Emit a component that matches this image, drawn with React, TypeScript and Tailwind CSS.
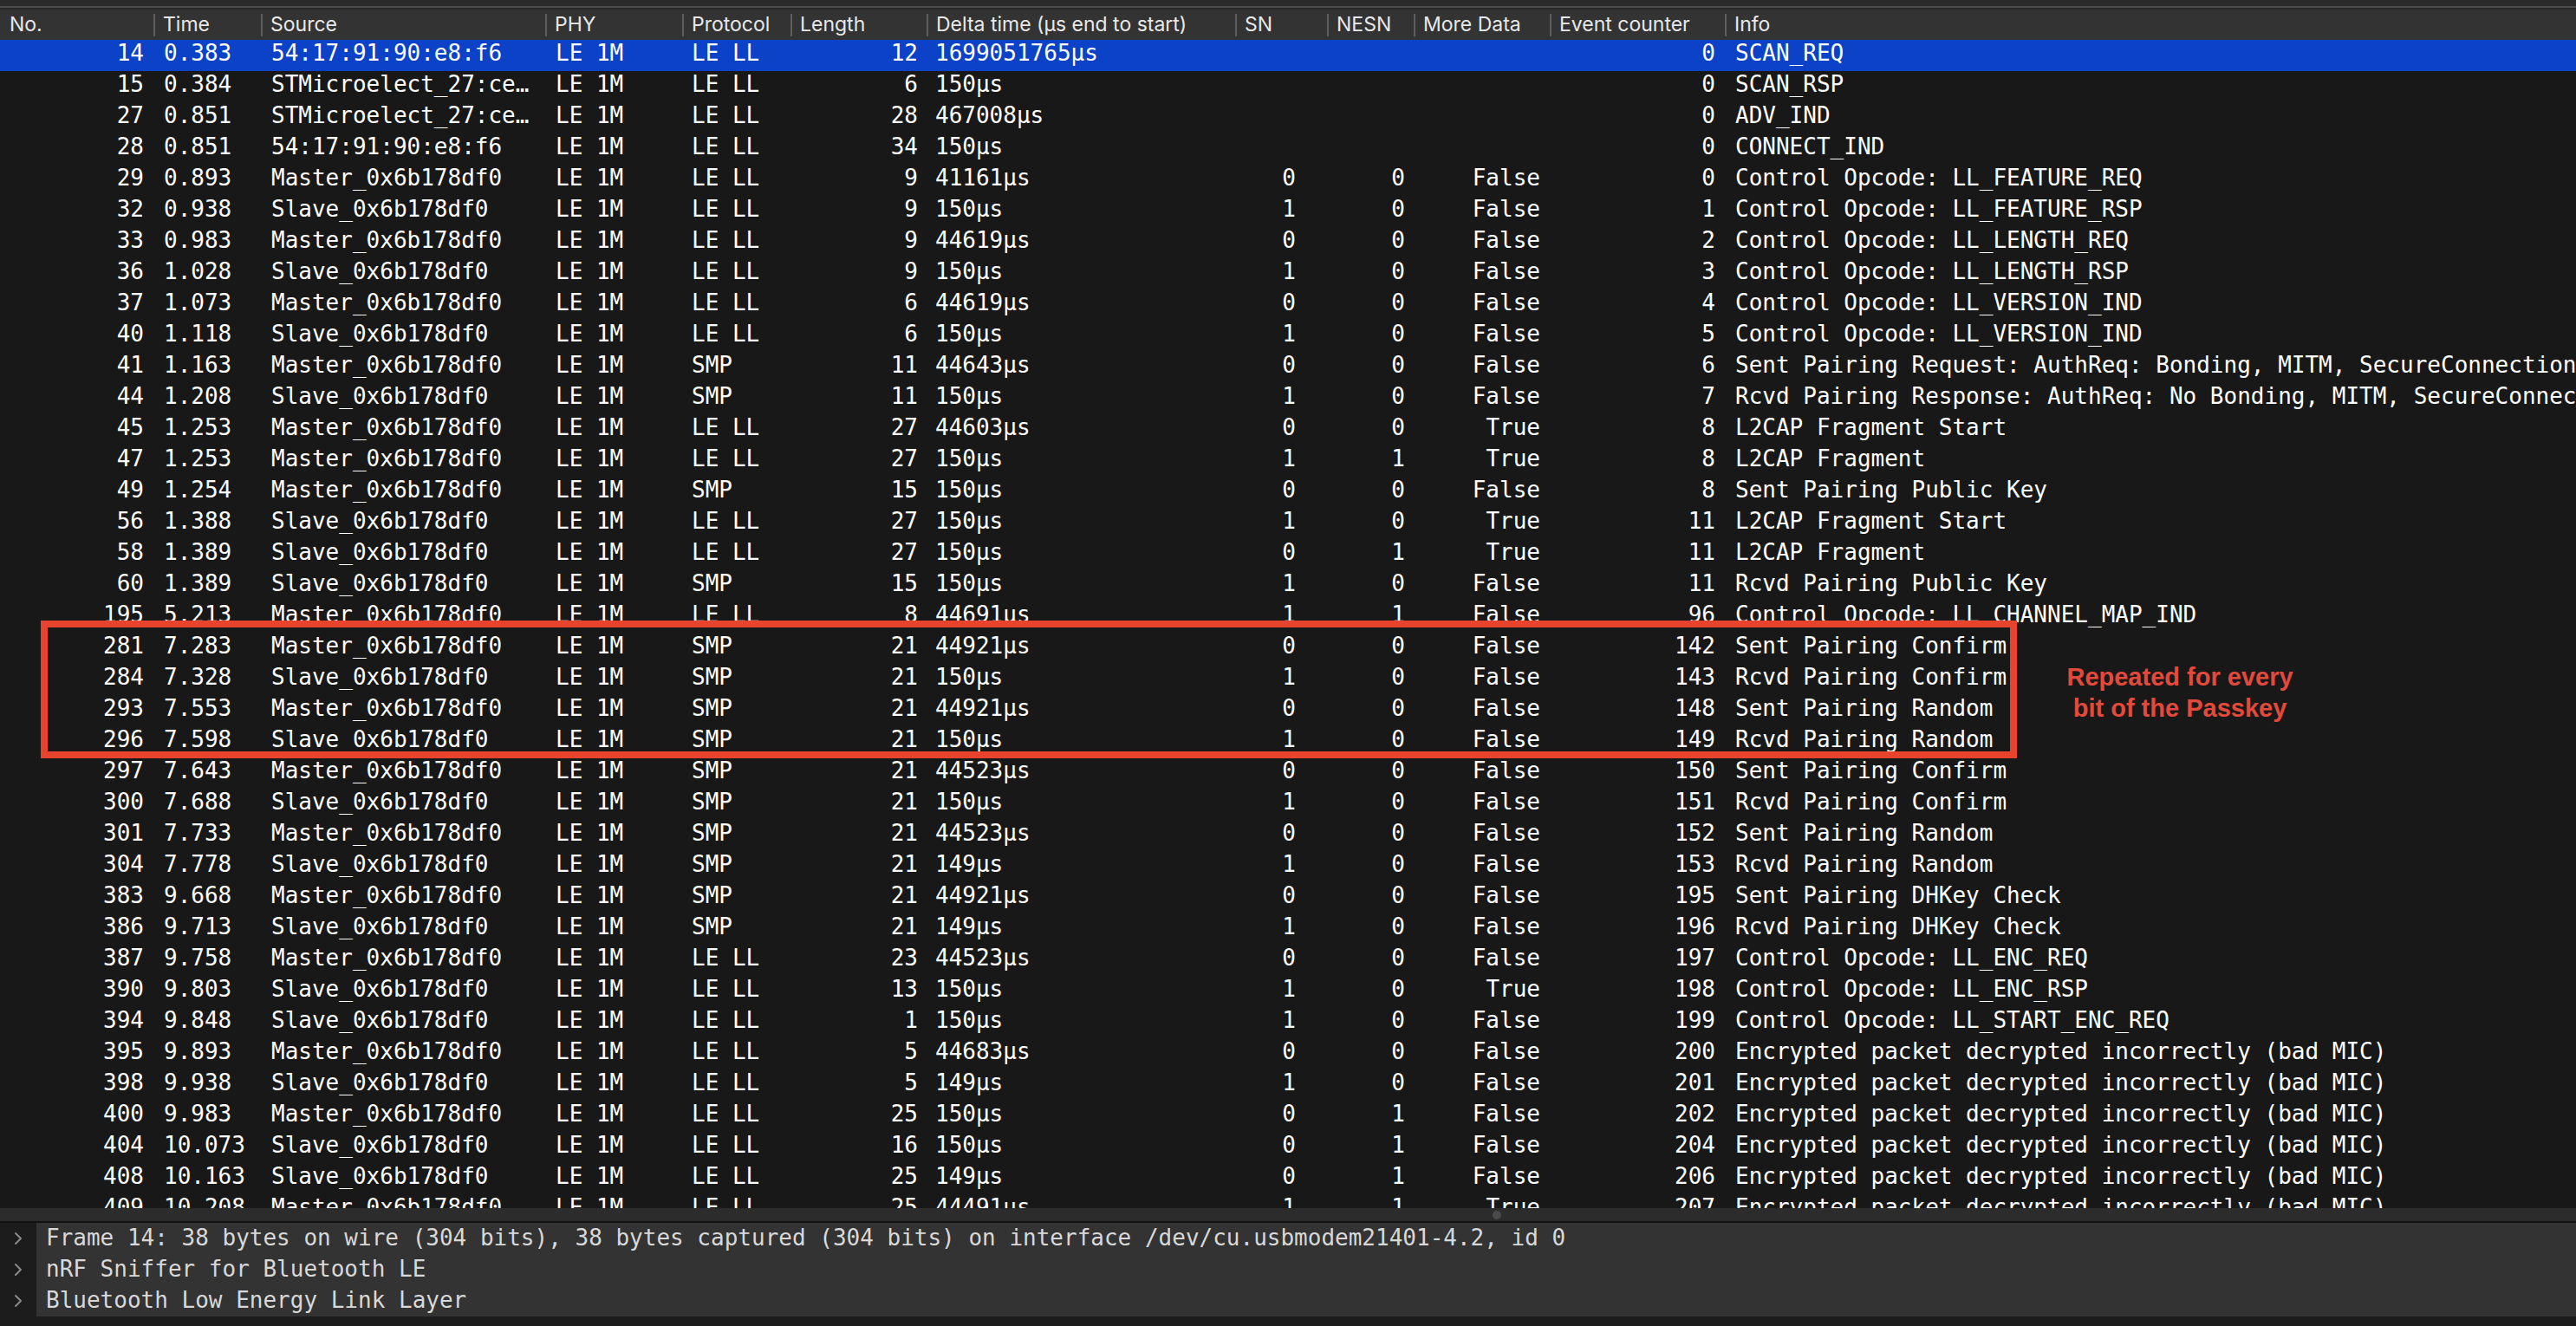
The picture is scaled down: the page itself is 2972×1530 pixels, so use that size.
import React from 'react';

const M = 'Master_0x6b178df0';
const S = 'Slave_0x6b178df0';
const ST = 'STMicroelect_27:ce…';
const A = '54:17:91:90:e8:f6';
const BAD = 'Encrypted packet decrypted incorrectly (bad MIC)';

// no, time, source, phy, protocol, length, delta, sn, nesn, more, event, info
const packets: string[][] = [
  ['14', '0.383', A, 'LE 1M', 'LE LL', '12', '1699051765µs', '', '', '', '0', 'SCAN_REQ'],
  ['15', '0.384', ST, 'LE 1M', 'LE LL', '6', '150µs', '', '', '', '0', 'SCAN_RSP'],
  ['27', '0.851', ST, 'LE 1M', 'LE LL', '28', '467008µs', '', '', '', '0', 'ADV_IND'],
  ['28', '0.851', A, 'LE 1M', 'LE LL', '34', '150µs', '', '', '', '0', 'CONNECT_IND'],
  ['29', '0.893', M, 'LE 1M', 'LE LL', '9', '41161µs', '0', '0', 'False', '0', 'Control Opcode: LL_FEATURE_REQ'],
  ['32', '0.938', S, 'LE 1M', 'LE LL', '9', '150µs', '1', '0', 'False', '1', 'Control Opcode: LL_FEATURE_RSP'],
  ['33', '0.983', M, 'LE 1M', 'LE LL', '9', '44619µs', '0', '0', 'False', '2', 'Control Opcode: LL_LENGTH_REQ'],
  ['36', '1.028', S, 'LE 1M', 'LE LL', '9', '150µs', '1', '0', 'False', '3', 'Control Opcode: LL_LENGTH_RSP'],
  ['37', '1.073', M, 'LE 1M', 'LE LL', '6', '44619µs', '0', '0', 'False', '4', 'Control Opcode: LL_VERSION_IND'],
  ['40', '1.118', S, 'LE 1M', 'LE LL', '6', '150µs', '1', '0', 'False', '5', 'Control Opcode: LL_VERSION_IND'],
  ['41', '1.163', M, 'LE 1M', 'SMP', '11', '44643µs', '0', '0', 'False', '6', 'Sent Pairing Request: AuthReq: Bonding, MITM, SecureConnection, CT2, IO Capability: KeyboardDisplay'],
  ['44', '1.208', S, 'LE 1M', 'SMP', '11', '150µs', '1', '0', 'False', '7', 'Rcvd Pairing Response: AuthReq: No Bonding, MITM, SecureConnection, CT2, IO Capability: DisplayOnly'],
  ['45', '1.253', M, 'LE 1M', 'LE LL', '27', '44603µs', '0', '0', 'True', '8', 'L2CAP Fragment Start'],
  ['47', '1.253', M, 'LE 1M', 'LE LL', '27', '150µs', '1', '1', 'True', '8', 'L2CAP Fragment'],
  ['49', '1.254', M, 'LE 1M', 'SMP', '15', '150µs', '0', '0', 'False', '8', 'Sent Pairing Public Key'],
  ['56', '1.388', S, 'LE 1M', 'LE LL', '27', '150µs', '1', '0', 'True', '11', 'L2CAP Fragment Start'],
  ['58', '1.389', S, 'LE 1M', 'LE LL', '27', '150µs', '0', '1', 'True', '11', 'L2CAP Fragment'],
  ['60', '1.389', S, 'LE 1M', 'SMP', '15', '150µs', '1', '0', 'False', '11', 'Rcvd Pairing Public Key'],
  ['195', '5.213', M, 'LE 1M', 'LE LL', '8', '44691µs', '1', '1', 'False', '96', 'Control Opcode: LL_CHANNEL_MAP_IND'],
  ['281', '7.283', M, 'LE 1M', 'SMP', '21', '44921µs', '0', '0', 'False', '142', 'Sent Pairing Confirm'],
  ['284', '7.328', S, 'LE 1M', 'SMP', '21', '150µs', '1', '0', 'False', '143', 'Rcvd Pairing Confirm'],
  ['293', '7.553', M, 'LE 1M', 'SMP', '21', '44921µs', '0', '0', 'False', '148', 'Sent Pairing Random'],
  ['296', '7.598', S, 'LE 1M', 'SMP', '21', '150µs', '1', '0', 'False', '149', 'Rcvd Pairing Random'],
  ['297', '7.643', M, 'LE 1M', 'SMP', '21', '44523µs', '0', '0', 'False', '150', 'Sent Pairing Confirm'],
  ['300', '7.688', S, 'LE 1M', 'SMP', '21', '150µs', '1', '0', 'False', '151', 'Rcvd Pairing Confirm'],
  ['301', '7.733', M, 'LE 1M', 'SMP', '21', '44523µs', '0', '0', 'False', '152', 'Sent Pairing Random'],
  ['304', '7.778', S, 'LE 1M', 'SMP', '21', '149µs', '1', '0', 'False', '153', 'Rcvd Pairing Random'],
  ['383', '9.668', M, 'LE 1M', 'SMP', '21', '44921µs', '0', '0', 'False', '195', 'Sent Pairing DHKey Check'],
  ['386', '9.713', S, 'LE 1M', 'SMP', '21', '149µs', '1', '0', 'False', '196', 'Rcvd Pairing DHKey Check'],
  ['387', '9.758', M, 'LE 1M', 'LE LL', '23', '44523µs', '0', '0', 'False', '197', 'Control Opcode: LL_ENC_REQ'],
  ['390', '9.803', S, 'LE 1M', 'LE LL', '13', '150µs', '1', '0', 'True', '198', 'Control Opcode: LL_ENC_RSP'],
  ['394', '9.848', S, 'LE 1M', 'LE LL', '1', '150µs', '1', '0', 'False', '199', 'Control Opcode: LL_START_ENC_REQ'],
  ['395', '9.893', M, 'LE 1M', 'LE LL', '5', '44683µs', '0', '0', 'False', '200', BAD],
  ['398', '9.938', S, 'LE 1M', 'LE LL', '5', '149µs', '1', '0', 'False', '201', BAD],
  ['400', '9.983', M, 'LE 1M', 'LE LL', '25', '150µs', '0', '1', 'False', '202', BAD],
  ['404', '10.073', S, 'LE 1M', 'LE LL', '16', '150µs', '0', '1', 'False', '204', BAD],
  ['408', '10.163', S, 'LE 1M', 'LE LL', '25', '149µs', '0', '1', 'False', '206', BAD],
  ['409', '10.208', M, 'LE 1M', 'LE LL', '25', '44491µs', '1', '1', 'True', '207', BAD],
];

const columns = [
  { title: 'No.', cell: 'w-[177px] shrink-0 justify-end pr-[11px]', head: 'w-[177px] shrink-0' },
  { title: 'Time', cell: 'w-[124px] shrink-0 pl-[12px]', head: 'w-[124px] shrink-0' },
  { title: 'Source', cell: 'w-[328px] shrink-0 pl-[12px]', head: 'w-[328px] shrink-0' },
  { title: 'PHY', cell: 'w-[158px] shrink-0 pl-[12px]', head: 'w-[158px] shrink-0' },
  { title: 'Protocol', cell: 'w-[125px] shrink-0 pl-[11px]', head: 'w-[125px] shrink-0' },
  { title: 'Length', cell: 'w-[157px] shrink-0 justify-end pr-[10px]', head: 'w-[157px] shrink-0' },
  { title: 'Delta time (µs end to start)', cell: 'w-[356px] shrink-0 pl-[10px]', head: 'w-[356px] shrink-0' },
  { title: 'SN', cell: 'w-[106px] shrink-0 justify-end pr-[36px]', head: 'w-[106px] shrink-0' },
  { title: 'NESN', cell: 'w-[100px] shrink-0 justify-end pr-[10px]', head: 'w-[100px] shrink-0' },
  { title: 'More Data', cell: 'w-[157px] shrink-0 justify-end pr-[11px]', head: 'w-[157px] shrink-0' },
  { title: 'Event counter', cell: 'w-[202px] shrink-0 justify-end pr-[11px]', head: 'w-[202px] shrink-0' },
  { title: 'Info', cell: 'flex-1 min-w-0 pl-[12px]', head: 'flex-1 min-w-0' },
];

const details = [
  'Frame 14: 38 bytes on wire (304 bits), 38 bytes captured (304 bits) on interface /dev/cu.usbmodem21401-4.2, id 0',
  'nRF Sniffer for Bluetooth LE',
  'Bluetooth Low Energy Link Layer',
];

function Chevron() {
  return (
    <svg width="12" height="16" viewBox="0 0 12 16" fill="none">
      <path d="M3 2 L9 8 L3 14" stroke="#8a8a8a" strokeWidth="2" strokeLinecap="round" strokeLinejoin="round" />
    </svg>
  );
}

export default function App() {
  return (
    <div className="w-full h-[1530px] flex flex-col bg-[#181818] overflow-hidden font-['DejaVu_Sans_Mono',monospace]">
      <div className="h-[7px] shrink-0 bg-[#2a2a2a]" />
      <div className="h-[2px] shrink-0 bg-[#4b4b4b]" />
      <div className="h-[2px] shrink-0 bg-[#262626]" />

      {/* column header */}
      <div className="h-[35px] shrink-0 flex bg-[#333333] text-[23px] text-[#e8e8e8] font-['Inter','Liberation_Sans',sans-serif] whitespace-nowrap">
        {columns.map((c, i) => (
          <div key={c.title} className={`${c.head} flex items-center overflow-hidden`}>
            {i > 0 && <span className="w-[2px] h-[26px] shrink-0 bg-[#5e5e5e]" />}
            <span className={i > 0 ? 'pl-[9px]' : 'pl-[11px]'}>{c.title}</span>
          </div>
        ))}
      </div>

      {/* packet list */}
      <div className="relative flex-1 min-h-0 overflow-hidden bg-[#181818] text-[26px] text-white">
        {packets.map((p, r) => (
          <div
            key={p[0]}
            className={`h-[36px] pb-[5px] flex items-center whitespace-nowrap ${r === 0 ? 'bg-[#0b42c7]' : ''}`}
          >
            {columns.map((c, i) => (
              <div key={c.title} className={`${c.cell} flex items-center overflow-hidden`}>
                {p[i]}
              </div>
            ))}
          </div>
        ))}

        <div className="absolute left-[47px] top-[670px] w-[2280px] h-[159px] border-[8px] border-[#e8442d] pointer-events-none" />
        <div className="absolute left-[2360px] top-[717px] w-[310px] text-center leading-[36px] text-[29px] font-bold text-[#e44a3b] font-['Liberation_Sans',Arial,sans-serif]">
          Repeated for every
          <br />
          bit of the Passkey
        </div>
      </div>

      {/* splitter */}
      <div className="h-[15px] shrink-0 flex items-center bg-[#2c2c2c]">
        <div className="ml-[1722px] w-[10px] h-[10px] rounded-full bg-[#4a4a4a]" />
      </div>
      <div className="h-[2px] shrink-0 bg-[#121212]" />

      {/* packet details */}
      <div className="h-[108px] shrink-0 flex">
        <div className="w-[42px] shrink-0 bg-[#1c1c1c] flex flex-col">
          {details.map((d) => (
            <div key={d} className="h-[36px] flex items-center justify-center">
              <Chevron />
            </div>
          ))}
        </div>
        <div className="flex-1 bg-[#333333] text-[26px] text-[#d8d8d8]">
          {details.map((d) => (
            <div key={d} className="h-[36px] pb-[2px] flex items-center pl-[11px] whitespace-nowrap">
              {d}
            </div>
          ))}
        </div>
      </div>

      <div className="h-[11px] shrink-0 bg-[#1c1c1c]" />
    </div>
  );
}
